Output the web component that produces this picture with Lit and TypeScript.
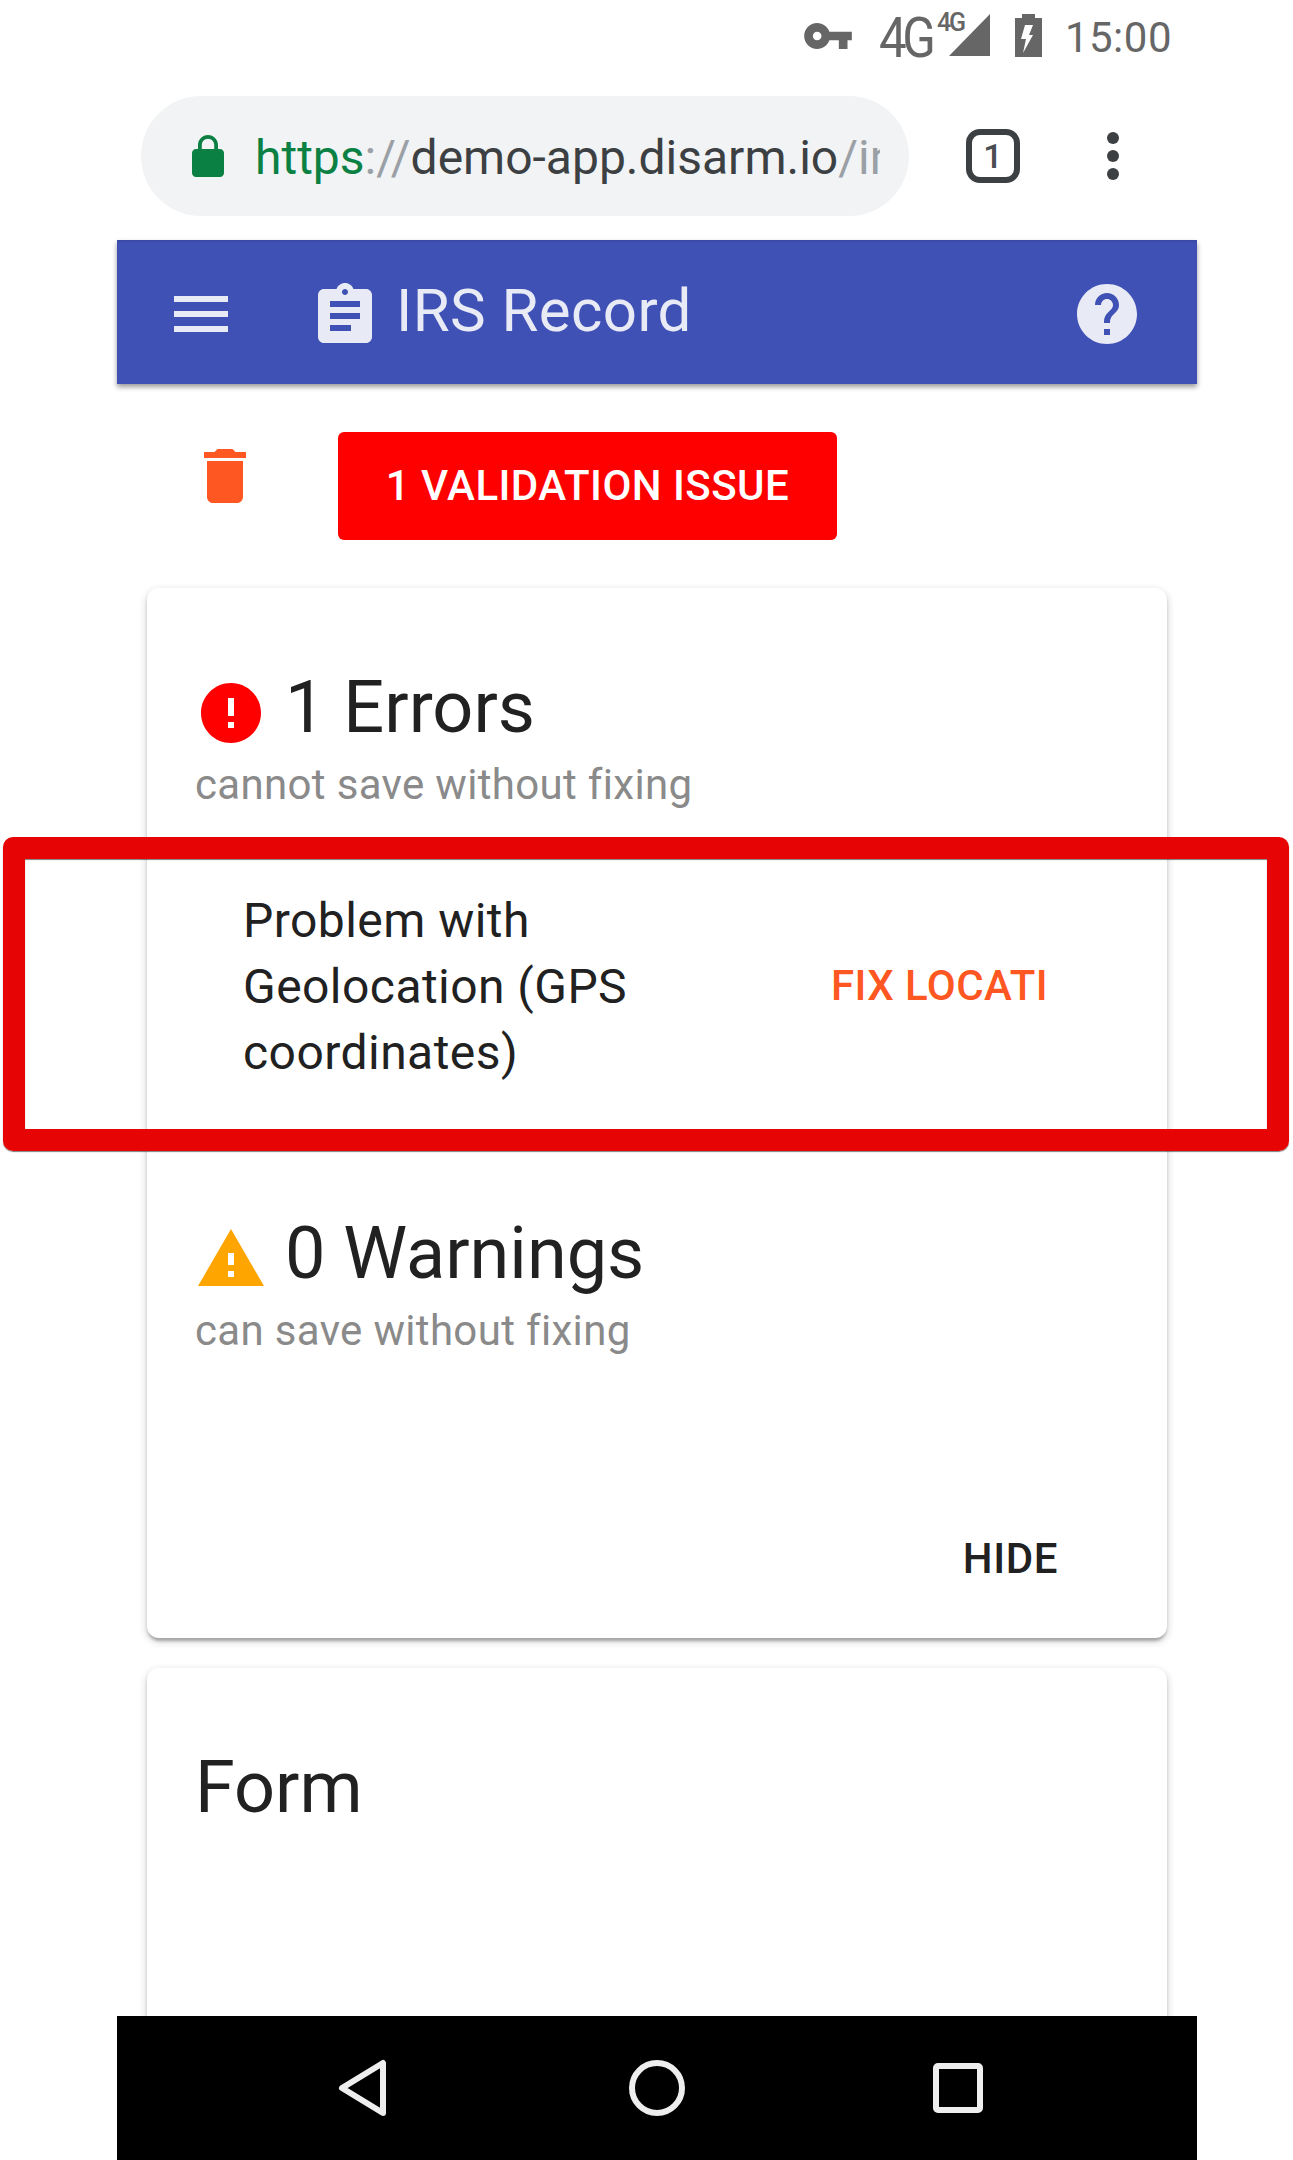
import { LitElement, html, css, svg } from 'lit';
import { customElement } from 'lit/decorators.js';

const icon = (d: string, cls: string) =>
  html`<svg class=${cls} viewBox="0 0 24 24"><path d=${d}></path></svg>`;

const paths = {
  menu: 'M3 18h18v-2H3v2zm0-5h18v-2H3v2zm0-7v2h18V6H3z',
  assignment:
    'M19 3h-4.18C14.4 1.84 13.3 1 12 1c-1.3 0-2.4.84-2.82 2H5c-1.1 0-2 .9-2 2v14c0 1.1.9 2 2 2h14c1.1 0 2-.9 2-2V5c0-1.1-.9-2-2-2zm-7 0c.55 0 1 .45 1 1s-.45 1-1 1-1-.45-1-1 .45-1 1-1zm2 14H7v-2h7v2zm3-4H7v-2h10v2zm0-4H7V7h10v2z',
  help: 'M12 2C6.48 2 2 6.48 2 12s4.48 10 10 10 10-4.48 10-10S17.52 2 12 2zm1 17h-2v-2h2v2zm2.07-7.75l-.9.92C13.45 12.9 13 13.5 13 15h-2v-.5c0-1.1.45-2.1 1.17-2.83l1.24-1.26c.37-.36.59-.86.59-1.41 0-1.1-.9-2-2-2s-2 .9-2 2H8c0-2.21 1.79-4 4-4s4 1.79 4 4c0 .88-.36 1.68-.93 2.25z',
  trash: 'M6 19c0 1.1.9 2 2 2h8c1.1 0 2-.9 2-2V7H6v12zM19 4h-3.5l-1-1h-5l-1 1H5v2h14V4z',
  error: 'M12 2C6.48 2 2 6.48 2 12s4.48 10 10 10 10-4.48 10-10S17.52 2 12 2zm1 15h-2v-2h2v2zm0-4h-2V7h2v6z',
  warning: 'M1 21h22L12 2 1 21zm12-3h-2v-2h2v2zm0-4h-2v-4h2v4z',
  key: 'M12.65 10C11.83 7.67 9.61 6 7 6c-3.31 0-6 2.69-6 6s2.69 6 6 6c2.61 0 4.83-1.67 5.65-4H17v4h4v-4h2v-4H12.65zM7 14c-1.1 0-2-.9-2-2s.9-2 2-2 2 .9 2 2-.9 2-2 2z',
  lock: 'M18 8h-1V6c0-2.76-2.24-5-5-5S7 3.24 7 6v2H6c-1.1 0-2 .9-2 2v10c0 1.1.9 2 2 2h12c1.1 0 2-.9 2-2V10c0-1.1-.9-2-2-2zM15.1 8H8.9V6c0-1.71 1.39-3.1 3.1-3.1 1.71 0 3.1 1.39 3.1 3.1v2z',
};

@customElement('app-root')
export class AppRoot extends LitElement {
  render() {
    return html`
      <div class="phone">
        <header class="top">
          <div class="status">
            ${icon(paths.key, 'key')}
            <span class="net">4G</span>
            <span class="signal">
              <svg viewBox="0 0 41 42"><path d="M41 0v42H0z"></path></svg>
              <span class="net-small">4G</span>
            </span>
            <svg class="battery" viewBox="0 0 27 43">
              <path d="M7 0h13v4h7v39H0V4h7z"></path>
              <path class="bolt" d="M10 11h8l-4 10h4L8 39l3-14H6z"></path>
            </svg>
            <span class="clock">15:00</span>
          </div>
          <div class="chrome">
            <div class="pill">
              ${icon(paths.lock, 'lock')}
              <div class="url"><span class="https">https</span><span class="dim">://</span><span class="host">demo-app.disarm.io</span><span class="dim">/index</span></div>
            </div>
            <div class="tabs">1</div>
            <div class="dots"><i></i><i></i><i></i></div>
          </div>
        </header>

        <div class="appbar">
          ${icon(paths.menu, 'bar-menu')}
          ${icon(paths.assignment, 'bar-clip')}
          <span class="bar-title">IRS Record</span>
          ${icon(paths.help, 'bar-help')}
        </div>

        <main class="content">
          <div class="actions">
            ${icon(paths.trash, 'trash')}
            <button class="issue">1 VALIDATION ISSUE</button>
          </div>

          <section class="card first">
            <div class="head">
              ${icon(paths.error, 'state error')}
              <h2>1 Errors</h2>
            </div>
            <p class="sub">cannot save without fixing</p>
            <div class="row">
              <div class="problem">Problem with Geolocation (GPS coordinates)</div>
              <span class="fix">FIX LOCATI</span>
            </div>
            <div class="head warn-head">
              ${icon(paths.warning, 'state warning')}
              <h2>0 Warnings</h2>
            </div>
            <p class="sub">can save without fixing</p>
            <div class="foot"><span class="hide">HIDE</span></div>
          </section>

          <section class="card form">
            <h2>Form</h2>
          </section>
        </main>

        <nav class="nav">
          <svg viewBox="0 0 72 72">${svg`<path d="M55 11v50L14 36z"></path>`}</svg>
          <svg viewBox="0 0 72 72">${svg`<circle cx="36" cy="36" r="25"></circle>`}</svg>
          <svg class="square" viewBox="0 0 72 72">${svg`<rect x="14" y="14" width="44" height="44" rx="2"></rect>`}</svg>
        </nav>
      </div>
      <div class="highlight"></div>
    `;
  }

  static styles = css`
    :host {
      display: block;
      position: relative;
      width: 1293px;
      height: 2160px;
      overflow: hidden;
      background: #fff;
      font-family: Roboto, 'Liberation Sans', sans-serif;
      color: #212121;
    }
    .phone {
      width: 1080px;
      height: 2160px;
      margin-left: 117px;
      display: grid;
      grid-template-rows: 240px 144px 1fr 144px;
    }

    /* status bar and browser chrome */
    .status {
      height: 75px;
      display: flex;
      align-items: center;
      justify-content: flex-end;
      padding-right: 25px;
      color: #666;
      fill: #666;
    }
    .key {
      width: 52px;
      height: 52px;
      margin: 0 25px 4px 0;
    }
    .net {
      font-size: 56px;
      line-height: 72px;
      letter-spacing: -5px;
      transform: scaleX(0.88);
      transform-origin: left center;
      width: 57px;
    }
    .signal {
      position: relative;
      width: 41px;
      height: 42px;
      margin: 0 0 5px 13px;
    }
    .signal svg {
      display: block;
      width: 41px;
      height: 42px;
    }
    .net-small {
      position: absolute;
      left: -12px;
      top: -2px;
      font-size: 25px;
      font-weight: 500;
      line-height: 22px;
      letter-spacing: -2px;
    }
    .battery {
      width: 27px;
      height: 43px;
      margin: 0 0 5px 25px;
    }
    .bolt {
      fill: #fff;
    }
    .clock {
      font-size: 42px;
      line-height: 72px;
      letter-spacing: 0.5px;
      margin-left: 23px;
    }
    .chrome {
      height: 165px;
      display: flex;
      align-items: flex-start;
      padding: 21px 0 0 24px;
    }
    .pill {
      width: 768px;
      height: 120px;
      box-sizing: border-box;
      border-radius: 60px;
      background: #f1f3f4;
      display: flex;
      align-items: center;
      padding-left: 43px;
    }
    .lock {
      width: 48px;
      height: 48px;
      fill: #0b8043;
      flex: none;
      margin-top: 2px;
    }
    .url {
      width: 625px;
      margin: 3px 0 0 23px;
      overflow: hidden;
      white-space: nowrap;
      font-size: 48px;
      line-height: 60px;
      color: #3c4043;
    }
    .https {
      color: #0b8043;
    }
    .dim {
      color: #9aa0a6;
    }
    .tabs {
      width: 54px;
      height: 54px;
      box-sizing: border-box;
      margin: 33px 0 0 57px;
      border: 6px solid #3c4043;
      border-radius: 14px;
      font-size: 34px;
      font-weight: 500;
      line-height: 42px;
      text-align: center;
      color: #4a4e52;
    }
    .dots {
      display: flex;
      flex-direction: column;
      gap: 6px;
      margin: 36px 0 0 87px;
    }
    .dots i {
      display: block;
      width: 12px;
      height: 12px;
      border-radius: 50%;
      background: #3c4043;
    }

    /* app bar */
    .appbar {
      background: #3f51b5;
      box-shadow: 0 3px 5px rgba(0, 0, 0, 0.4), inset 0 3px 3px -2px rgba(0, 0, 0, 0.15);
      display: flex;
      align-items: flex-start;
      fill: #e8eaf6;
      position: relative;
      z-index: 1;
    }
    .bar-menu,
    .bar-clip,
    .bar-help {
      width: 72px;
      height: 72px;
      flex: none;
    }
    .bar-menu {
      margin: 38px 0 0 48px;
    }
    .bar-clip {
      margin: 40px 0 0 72px;
    }
    .bar-title {
      margin: 36px 0 0 15px;
      font-size: 60px;
      line-height: 70px;
      letter-spacing: 0.4px;
      color: #e8eaf6;
    }
    .bar-help {
      margin: 38px 54px 0 auto;
    }

    /* content */
    .content {
      overflow: hidden;
      min-height: 0;
    }
    .actions {
      display: flex;
      align-items: flex-start;
      padding: 48px 0 0 72px;
    }
    .trash {
      width: 72px;
      height: 72px;
      margin-top: 8px;
      fill: #ff5722;
    }
    .issue {
      width: 499px;
      height: 108px;
      margin-left: 77px;
      border: none;
      border-radius: 6px;
      background: #f00;
      color: #fff;
      font: 500 42px Roboto, sans-serif;
      letter-spacing: 0.45px;
      padding: 0 0 2px;
    }
    .card {
      width: 1020px;
      margin-left: 30px;
      box-sizing: border-box;
      background: #fff;
      border-radius: 12px;
      box-shadow: 0 3px 9px rgba(0, 0, 0, 0.2), 0 3px 3px rgba(0, 0, 0, 0.14), 0 6px 3px -3px rgba(0, 0, 0, 0.12);
    }
    .first {
      margin-top: 48px;
      height: 1050px;
      padding: 78px 0 0 48px;
    }
    .head {
      display: flex;
      align-items: flex-start;
      gap: 18px;
    }
    .warn-head {
      margin-top: 126px;
    }
    h2 {
      margin: 0;
      font-size: 72px;
      line-height: 84px;
      font-weight: 400;
    }
    .state {
      width: 72px;
      height: 72px;
      margin-top: 11px;
      flex: none;
    }
    .error {
      fill: #f00;
    }
    .warning {
      fill: #ffa500;
    }
    .sub {
      margin: 11px 0 0;
      font-size: 42px;
      line-height: 48px;
      letter-spacing: 0.33px;
      color: #8a8a8a;
    }
    .row {
      display: flex;
      align-items: center;
      margin: 79px 0 0 48px;
      padding-right: 119px;
    }
    .problem {
      width: 430px;
      font-size: 48px;
      line-height: 66px;
      letter-spacing: 0.45px;
    }
    .fix {
      margin: 0 0 2px auto;
      font-size: 42px;
      font-weight: 500;
      line-height: 48px;
      letter-spacing: 0.42px;
      color: #ff5722;
      white-space: nowrap;
    }
    .foot {
      display: flex;
      justify-content: flex-end;
      margin-top: 180px;
      padding-right: 109px;
    }
    .hide {
      font-size: 42px;
      font-weight: 500;
      line-height: 48px;
      letter-spacing: 0.6px;
    }
    .form {
      margin-top: 30px;
      height: 600px;
      padding: 78px 0 0 48px;
    }

    /* android nav bar */
    .nav {
      background: #000;
      display: flex;
      align-items: center;
      padding-left: 211px;
      gap: 221px;
      position: relative;
      z-index: 1;
    }
    .nav .square {
      margin-left: 8px;
    }
    .nav svg {
      width: 72px;
      height: 72px;
      fill: none;
      stroke: #eee;
      stroke-width: 6;
      stroke-linejoin: round;
    }

    /* annotation frame over the list row */
    .highlight {
      position: absolute;
      left: 3px;
      top: 837px;
      width: 1286px;
      height: 314px;
      box-sizing: border-box;
      border: 22px solid #e60404;
      border-radius: 10px;
      box-shadow: 0 1px 1px rgba(0, 0, 0, 0.5), inset 0 1px 1px rgba(0, 0, 0, 0.5);
      z-index: 2;
    }
  `;
}

declare global {
  interface HTMLElementTagNameMap {
    'app-root': AppRoot;
  }
}
